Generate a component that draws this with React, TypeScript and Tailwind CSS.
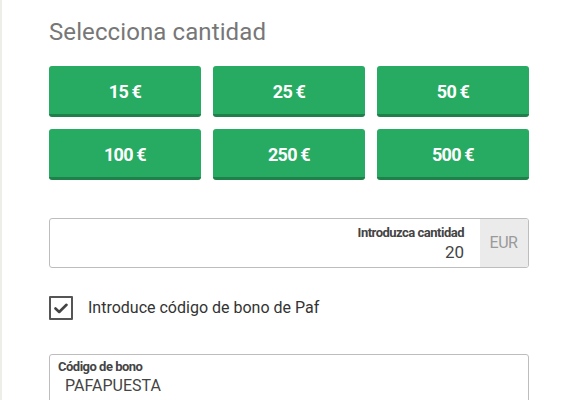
import { useState } from "react";

const amounts = ["15 €", "25 €", "50 €", "100 €", "250 €", "500 €"];

function AmountButton({ label }: { label: string }) {
  return (
    <button className="h-[51px] rounded-[3px] bg-[#27ab62] border-b-[3px] border-[#1f8049] text-white text-[18px] font-bold tracking-[-0.8px] flex items-center justify-center pt-[2px]">
      {label}
    </button>
  );
}

function CheckIcon() {
  return (
    <svg width="14" height="11" viewBox="0 0 14 11" fill="none">
      <path d="M1.5 5.5 L5.2 9 L12.5 1.8" stroke="#444" strokeWidth="2.6" strokeLinecap="round" strokeLinejoin="round" />
    </svg>
  );
}

export default function App() {
  const [checked, setChecked] = useState(true);
  return (
    <div className="w-[567px] h-[400px] bg-white border-l-2 border-[#eeeee8] overflow-hidden font-['Roboto',sans-serif]">
      <div className="w-[480px] ml-[47px]">
        <h2 className="text-[24px] text-[#777] leading-none pt-[20px] h-[66px] tracking-[0.1px]">Selecciona cantidad</h2>

        <div className="grid grid-cols-3 gap-x-[12px] gap-y-[12px]">
          {amounts.map((a) => (
            <AmountButton key={a} label={a} />
          ))}
        </div>

        <div className="mt-[38px] h-[50px] flex border border-[#bdbdbd] rounded-[3px] overflow-hidden">
          <div className="flex-1 flex flex-col items-end justify-center pr-[16px] pt-[1px]">
            <span className="text-[13px] font-bold text-[#444] tracking-[-0.5px] leading-none">Introduzca cantidad</span>
            <span className="text-[17px] text-[#444] leading-none mt-[5px]">20</span>
          </div>
          <div className="w-[48px] bg-[#ebebeb] flex items-center justify-center pr-[1px]">
            <span className="text-[16px] text-[#9a9a9a] tracking-[-0.5px]">EUR</span>
          </div>
        </div>

        <label className="mt-[28px] flex items-center cursor-pointer" onClick={() => setChecked(!checked)}>
          <span className="w-[24px] h-[24px] border-2 border-[#555] rounded-[1px] flex items-center justify-center">
            {checked && <CheckIcon />}
          </span>
          <span className="ml-[15px] text-[16px] text-[#333]">Introduce código de bono de Paf</span>
        </label>

        <div className="mt-[34px] h-[60px] border border-[#bdbdbd] rounded-[3px] px-[8px] pt-[5px]">
          <div className="text-[13px] font-bold text-[#444] tracking-[-0.5px] leading-none">Código de bono</div>
          <div className="text-[16px] text-[#444] leading-none mt-[5px] ml-[7px]">PAFAPUESTA</div>
        </div>
      </div>
    </div>
  );
}
